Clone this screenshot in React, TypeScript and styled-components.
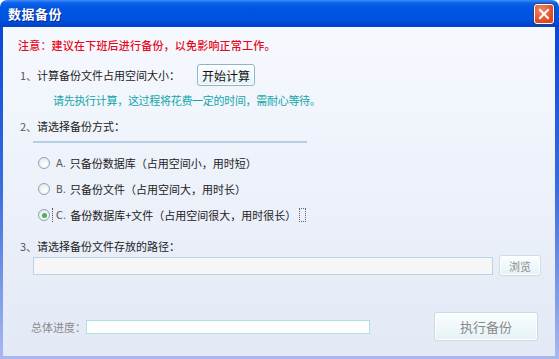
import { FC } from "react";
import styled, { createGlobalStyle } from "styled-components";

const GlobalStyle = createGlobalStyle`
  html, body {
    margin: 0;
    padding: 0;
    background: #ffffff;
  }
  * {
    box-sizing: border-box;
  }
`;

const Window = styled.div`
  width: 559px;
  height: 359px;
  display: flex;
  flex-direction: column;
  font-family: "Noto Sans CJK SC", "Noto Sans", sans-serif;
  font-size: 11px;
`;

const TitleBar = styled.div`
  height: 27px;
  flex-shrink: 0;
  display: flex;
  align-items: center;
  justify-content: space-between;
  padding: 0 5px 0 8px;
  border-radius: 7px 7px 0 0;
  background: linear-gradient(
    #3d8ef7 0,
    #0d61ea 3px,
    #0055e5 8px,
    #0052df 19px,
    #0043c9 100%
  );
`;

const Title = styled.span`
  color: #ffffff;
  font-size: 13px;
  font-weight: bold;
  letter-spacing: 0.5px;
  text-shadow: 1px 1px 0 #0b2a8c;
`;

const CloseButton = styled.button`
  width: 20px;
  height: 20px;
  padding: 0;
  display: flex;
  align-items: center;
  justify-content: center;
  border: 1px solid #ffffff;
  border-radius: 3px;
  background: radial-gradient(circle at 35% 30%, #f08a67, #dc4a22 70%);
  box-shadow: 0 0 0 0.5px #6a2a10;
`;

const Frame = styled.div`
  flex: 1;
  display: flex;
  flex-direction: column;
  border-style: solid;
  border-width: 0 4px 3px 3px;
  border-image: linear-gradient(#0848d6, #3a6ee0 50%, #a8b8ee) 1;
  background: linear-gradient(#f6f9fe, #ecf1fa 50%, #e3e9f5);
  padding: 10px 14px 0 15px;
`;

const Warning = styled.div`
  line-height: 16px;
  color: #e8081c;
  font-weight: 500;
  letter-spacing: 0.2px;
`;

const StepRow = styled.div<{ $top: number }>`
  display: flex;
  align-items: center;
  margin-top: ${(p) => p.$top}px;
  padding-left: 2px;
  min-height: 16px;
  line-height: 16px;
  color: #222;
`;

const Num = styled.span`
  color: #555;
`;

const Hint = styled.div`
  margin-top: 6px;
  padding-left: 35px;
  line-height: 16px;
  color: #12a6a8;
  letter-spacing: -0.3px;
`;

const LightButton = styled.button<{ $w: number; $h: number; $fs: number; $muted?: boolean }>`
  width: ${(p) => p.$w}px;
  height: ${(p) => p.$h}px;
  padding: 0;
  font-family: inherit;
  font-size: ${(p) => p.$fs}px;
  color: ${(p) => (p.$muted ? "#8a8a8a" : "#111")};
  border: 1px solid ${(p) => (p.$muted ? "#cddbe2" : "#8fb3c8")};
  border-radius: 3px;
  background: linear-gradient(#fbfeff, #e4f2f6);
  box-shadow: inset 0 0 0 1px #ffffff;
`;

const Gap = styled.span<{ $w: number }>`
  width: ${(p) => p.$w}px;
`;

const Divider = styled.div`
  margin: 7px 0 0 15px;
  width: 274px;
  height: 2px;
  background: #b4cfe6;
`;

const Options = styled.div`
  margin-top: 7px;
  display: flex;
  flex-direction: column;
`;

const Option = styled.label`
  height: 26px;
  display: flex;
  align-items: center;
  padding-left: 20px;
  color: #222;
`;

const Radio = styled.span<{ $checked?: boolean }>`
  width: 12px;
  height: 12px;
  border-radius: 50%;
  border: 1px solid #8fa2b4;
  background: radial-gradient(circle at 60% 65%, #ffffff, #dfe5ea);
  display: flex;
  align-items: center;
  justify-content: center;
  flex-shrink: 0;
  &::after {
    content: "";
    display: ${(p) => (p.$checked ? "block" : "none")};
    width: 5px;
    height: 5px;
    border-radius: 50%;
    background: #4caf50;
  }
`;

const Letter = styled.span`
  margin-left: 6px;
  color: #555;
  font-family: "DejaVu Sans", sans-serif;
  font-size: 10px;
  margin-right: 4px;
`;

const FocusLine = styled.span`
  width: 1px;
  height: 14px;
  margin-left: 2px;
  margin-right: -3px;
  border-left: 1px dotted #555;
`;

const FocusBox = styled.span`
  width: 7px;
  height: 14px;
  margin-left: 3px;
  border: 1px dotted #666;
`;

const PathRow = styled.div`
  margin-top: 1px;
  padding-left: 15px;
  display: flex;
  align-items: center;
  gap: 6px;
`;

const PathInput = styled.div`
  width: 460px;
  height: 18px;
  border: 1px solid #bdd3e3;
  background: #f6f6f6;
`;

const Footer = styled.div`
  margin-top: 36px;
  display: flex;
  align-items: center;
  padding-left: 13px;
  padding-right: 3px;
`;

const ProgressLabel = styled.span`
  color: #8a8a8a;
  width: 55px;
`;

const ProgressBox = styled.div`
  width: 284px;
  height: 14px;
  border: 1px solid #a9e2e0;
  background: #ffffff;
`;

const Spacer = styled.div`
  flex: 1;
`;

const App: FC = () => {
  return (
    <Window>
      <GlobalStyle />
      <TitleBar>
        <Title>数据备份</Title>
        <CloseButton>
          <svg width="12" height="12" viewBox="0 0 12 12">
            <path d="M2 2 L10 10 M10 2 L2 10" stroke="#ffffff" strokeWidth="2" strokeLinecap="square" />
          </svg>
        </CloseButton>
      </TitleBar>
      <Frame>
        <Warning>注意：建议在下班后进行备份，以免影响正常工作。</Warning>

        <StepRow $top={11}>
          <Num>1、</Num>
          计算备份文件占用空间大小：
          <Gap $w={17} />
          <LightButton $w={58} $h={22} $fs={12}>
            开始计算
          </LightButton>
        </StepRow>
        <Hint>请先执行计算，这过程将花费一定的时间，需耐心等待。</Hint>

        <StepRow $top={10}>
          <Num>2、</Num>
          请选择备份方式：
        </StepRow>
        <Divider />

        <Options>
          <Option>
            <Radio />
            <Letter>A.</Letter>
            只备份数据库（占用空间小，用时短）
          </Option>
          <Option>
            <Radio />
            <Letter>B.</Letter>
            只备份文件（占用空间大，用时长）
          </Option>
          <Option>
            <Radio $checked />
            <FocusLine />
            <Letter>C.</Letter>
            备份数据库+文件（占用空间很大，用时很长）
            <FocusBox />
          </Option>
        </Options>

        <StepRow $top={10}>
          <Num>3、</Num>
          请选择备份文件存放的路径：
        </StepRow>
        <PathRow>
          <PathInput />
          <LightButton $w={42} $h={21} $fs={11} $muted>
            浏览
          </LightButton>
        </PathRow>

        <Footer>
          <ProgressLabel>总体进度：</ProgressLabel>
          <ProgressBox />
          <Spacer />
          <LightButton $w={104} $h={29} $fs={13} $muted>
            执行备份
          </LightButton>
        </Footer>
      </Frame>
    </Window>
  );
};

export default App;
